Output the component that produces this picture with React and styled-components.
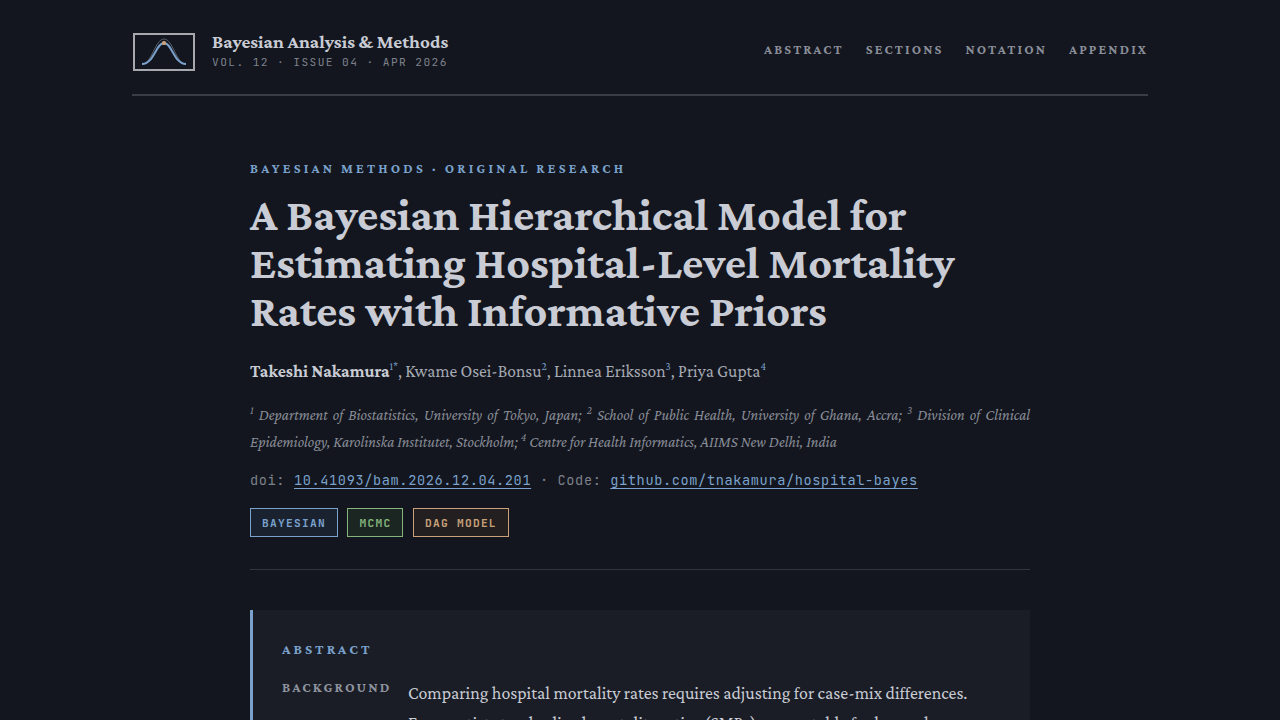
import React from "react";
import styled, { createGlobalStyle } from "styled-components";

const serif = `"Crimson Pro", "Crimson Text", "Liberation Serif", serif`;
const mono = `"JetBrains Mono", "DejaVu Sans Mono", "Liberation Mono", monospace`;
const accent = "#7aa2cc";

const GlobalStyle = createGlobalStyle`
  html, body {
    margin: 0;
    padding: 0;
    background: #13161e;
    font-family: ${serif};
  }
  * { box-sizing: border-box; }
`;

const Page = styled.div`
  width: 1016px;
  margin: 0 auto;
`;

const Header = styled.header`
  display: flex;
  align-items: center;
  justify-content: space-between;
  height: 96px;
  padding: 10px 0 0;
  border-bottom: 2px solid #3a3d47;
`;

const Brand = styled.div`
  display: flex;
  align-items: center;
  gap: 16px;
`;

const LogoBox = styled.svg`
  display: block;
  width: 64px;
  height: 40px;
`;

const BrandText = styled.div`
  margin-bottom: 4px;
`;

const BrandTitle = styled.div`
  font-size: 19.1px;
  font-weight: 700;
  line-height: 24px;
  color: #c9ccd4;
`;

const BrandMeta = styled.div`
  font-family: ${mono};
  font-size: 11.2px;
  line-height: 16px;
  letter-spacing: 1.42px;
  color: #7d818c;
`;

const Nav = styled.nav`
  display: flex;
  gap: 22px;
  margin-top: -5px;
`;

const NavLink = styled.a`
  font-size: 13.6px;
  font-weight: 700;
  letter-spacing: 2.1px;
  color: #8a8e99;
`;

const Article = styled.main`
  width: 780px;
  margin: 0 auto;
  padding-top: 64px;
`;

const Kicker = styled.div`
  font-size: 13.6px;
  font-weight: 700;
  letter-spacing: 3.2px;
  line-height: 18px;
  color: ${accent};
`;

const Title = styled.h1`
  margin: 13px 0 0;
  font-size: 46px;
  font-weight: 700;
  line-height: 48px;
  color: #c9ccd4;
`;

const Authors = styled.div`
  margin-top: 24px;
  font-size: 17.5px;
  line-height: 24px;
  color: #a5a9b3;
  sup {
    font-size: 11px;
    line-height: 0;
    color: ${accent};
  }
`;

const Lead = styled.strong`
  color: #c9ccd4;
`;

const Affiliations = styled.p`
  margin: 18px 0 0;
  font-size: 15.2px;
  font-style: italic;
  line-height: 27px;
  text-align: justify;
  color: #888c97;
  sup {
    font-size: 11px;
    line-height: 0;
  }
`;

const MetaLine = styled.div`
  margin-top: 15px;
  font-family: ${mono};
  font-size: 13.6px;
  line-height: 20px;
  letter-spacing: 0.63px;
  color: #7d818c;
`;

const MetaLink = styled.a`
  color: ${accent};
  text-decoration: underline;
  text-underline-offset: 3px;
`;

const Tags = styled.div`
  display: flex;
  gap: 9.6px;
  margin-top: 18px;
`;

const Tag = styled.span`
  height: 29px;
  padding: 0 11px;
  display: flex;
  align-items: center;
  font-family: ${mono};
  font-size: 11.2px;
  font-weight: 700;
  letter-spacing: 1.27px;
  color: ${(p) => p.$color};
  background: ${(p) => p.$bg};
  border: 1px solid ${(p) => p.$color};
`;

const Rule = styled.hr`
  margin: 32px 0 40px;
  border: 0;
  border-top: 1px solid #32353f;
`;

const Abstract = styled.section`
  padding: 30px 28px 30px 29px;
  background: #1a1d26;
  border-left: 3px solid ${accent};
`;

const AbstractHead = styled.div`
  font-size: 14.4px;
  font-weight: 700;
  letter-spacing: 3px;
  line-height: 18px;
  color: ${accent};
`;

const AbstractRow = styled.div`
  display: grid;
  grid-template-columns: 110px 1fr;
  column-gap: 16px;
  margin-top: 16px;
`;

const RowLabel = styled.div`
  padding-top: 1px;
  font-size: 14px;
  font-weight: 700;
  letter-spacing: 2px;
  line-height: 24px;
  white-space: nowrap;
  color: #8f939e;
`;

const RowText = styled.p`
  margin: 0;
  padding-top: 4px;
  font-size: 17.85px;
  line-height: 30px;
  color: #c9ccd4;
`;

const App = () => (
  <>
    <GlobalStyle />
    <Page>
      <Header>
        <Brand>
          <LogoBox viewBox="0 0 64 40" aria-hidden="true">
            <rect x="2" y="2" width="60" height="36" fill="none" stroke="#a6a8ad" strokeWidth="2" />
            <path d="M10 32 C20 32 23 7 32 7 C41 7 44 32 54 32" fill="none" stroke="#5a6270" strokeWidth="1" />
            <path d="M10 32 C22 32 24 11 32 11 C40 11 42 32 54 32" fill="none" stroke={accent} strokeWidth="2" />
            <rect x="30" y="9" width="4" height="4" rx="1.5" fill="#c9a27a" />
          </LogoBox>
          <BrandText>
            <BrandTitle>Bayesian Analysis &amp; Methods</BrandTitle>
            <BrandMeta>VOL. 12 · ISSUE 04 · APR 2026</BrandMeta>
          </BrandText>
        </Brand>
        <Nav>
          <NavLink>ABSTRACT</NavLink>
          <NavLink>SECTIONS</NavLink>
          <NavLink>NOTATION</NavLink>
          <NavLink>APPENDIX</NavLink>
        </Nav>
      </Header>
      <Article>
        <Kicker>BAYESIAN METHODS · ORIGINAL RESEARCH</Kicker>
        <Title>A Bayesian Hierarchical Model for Estimating Hospital-Level Mortality Rates with Informative Priors</Title>
        <Authors>
          <Lead>Takeshi Nakamura</Lead><sup>1*</sup>, Kwame Osei-Bonsu<sup>2</sup>, Linnea Eriksson<sup>3</sup>, Priya Gupta<sup>4</sup>
        </Authors>
        <Affiliations>
          <sup>1</sup> Department of Biostatistics, University of Tokyo, Japan; <sup>2</sup> School of Public Health, University of Ghana, Accra; <sup>3</sup> Division of Clinical Epidemiology, Karolinska Institutet, Stockholm; <sup>4</sup> Centre for Health Informatics, AIIMS New Delhi, India
        </Affiliations>
        <MetaLine>
          doi: <MetaLink>10.41093/bam.2026.12.04.201</MetaLink> · Code: <MetaLink>github.com/tnakamura/hospital-bayes</MetaLink>
        </MetaLine>
        <Tags>
          <Tag $color={accent} $bg="#1a2230">BAYESIAN</Tag>
          <Tag $color="#85b57c" $bg="#1b2522">MCMC</Tag>
          <Tag $color="#c9a27a" $bg="#231f20">DAG MODEL</Tag>
        </Tags>
        <Rule />
        <Abstract>
          <AbstractHead>ABSTRACT</AbstractHead>
          <AbstractRow>
            <RowLabel>BACKGROUND</RowLabel>
            <RowText>Comparing hospital mortality rates requires adjusting for case-mix differences. Frequentist standardized mortality ratios (SMRs) are unstable for low-volume hospitals and tend to produce extreme estimates.</RowText>
          </AbstractRow>
        </Abstract>
      </Article>
    </Page>
  </>
);

export default App;
